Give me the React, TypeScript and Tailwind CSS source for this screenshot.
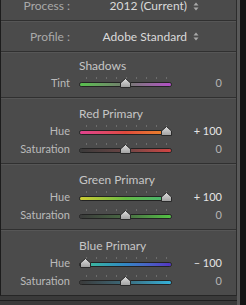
import React from "react";

type SliderRow = { label: string; track: string; pos: number; value: string; bright?: boolean };
type Section = { title: string; top: string; rows: SliderRow[] };

const ticks = [0, 1, 2, 3, 4, 5, 6, 7, 8];

const sections: Section[] = [
  {
    title: "Shadows",
    top: "pt-[5px]",
    rows: [
      { label: "Tint", track: "bg-linear-to-r from-[#56c04c] via-[#707a6c] to-[#b24cc6]", pos: 0.5, value: "0" },
    ],
  },
  {
    title: "Red Primary",
    top: "pt-[7px]",
    rows: [
      { label: "Hue", track: "bg-linear-to-r from-[#e0428e] via-[#e04a3c] to-[#ea8a22]", pos: 1, value: "+ 100", bright: true },
      { label: "Saturation", track: "bg-linear-to-r from-[#3a3a3a] via-[#6a4444] to-[#d24242]", pos: 0.5, value: "0" },
    ],
  },
  {
    title: "Green Primary",
    top: "pt-[7px]",
    rows: [
      { label: "Hue", track: "bg-linear-to-r from-[#cccc32] via-[#66bc42] to-[#42b474]", pos: 1, value: "+ 100", bright: true },
      { label: "Saturation", track: "bg-linear-to-r from-[#3a3a3a] via-[#486a42] to-[#52c442]", pos: 0.5, value: "0" },
    ],
  },
  {
    title: "Blue Primary",
    top: "pt-[7px]",
    rows: [
      { label: "Hue", track: "bg-linear-to-r from-[#42c290] via-[#3286c4] to-[#5232c2]", pos: 0, value: "– 100", bright: true },
      { label: "Saturation", track: "bg-linear-to-r from-[#3a3a3a] via-[#3a6a7a] to-[#32b2da]", pos: 0.5, value: "0" },
    ],
  },
];

function Divider() {
  return (
    <div>
      <div className="h-px bg-[#303030]" />
      <div className="h-px bg-[#565656]" />
    </div>
  );
}

function UpDown() {
  return (
    <svg width="6" height="9" viewBox="0 0 6 9" className="ml-[6px] shrink-0">
      <path d="M3 0.5 L5.5 3.5 H0.5 Z" fill="#a8a8a8" />
      <path d="M3 8.5 L5.5 5.5 H0.5 Z" fill="#a8a8a8" />
    </svg>
  );
}

function Thumb({ pos }: { pos: number }) {
  return (
    <svg
      className="absolute top-[4px]"
      style={{ left: 1 + pos * 80.5 }}
      width="11"
      height="10"
      viewBox="0 0 11 10"
    >
      <defs>
        <linearGradient id="thumbFill" x1="0" y1="0" x2="0" y2="1">
          <stop offset="0" stopColor="#e0e0e0" />
          <stop offset="1" stopColor="#9e9e9e" />
        </linearGradient>
      </defs>
      <path
        d="M5.5 0.5 L10.5 5 V9.5 H0.5 V5 Z"
        fill="url(#thumbFill)"
        stroke="#2a2a2a"
        strokeWidth="1"
        strokeLinejoin="round"
      />
    </svg>
  );
}

function Slider({ track, pos }: { track: string; pos: number }) {
  return (
    <div className="relative h-[18px] w-[93px] shrink-0">
      {ticks.map((i) => (
        <span key={i} className="absolute top-[3px] h-[2px] w-px bg-[#6c6c6c]" style={{ left: 7 + i * 10 }} />
      ))}
      <div className="absolute left-0 top-[8px] h-[5px] w-full overflow-hidden rounded-full border border-[#232323]">
        <div className={`h-full w-full ${track}`} />
      </div>
      <Thumb pos={pos} />
    </div>
  );
}

function PopupRow({ label, value, cls }: { label: string; value: string; cls: string }) {
  return (
    <div className={`flex items-center text-[12px] ${cls}`}>
      <span className="w-[69px] text-right text-[#a9a9a9]">{label}</span>
      <span className="w-[117px] text-right text-[#dadada]">{value}</span>
      <UpDown />
    </div>
  );
}

export default function App() {
  return (
    <div className="flex h-[305px] w-[246px] bg-[#3a3a3a] font-['Lato','Liberation_Sans',sans-serif]">
      <div className="flex w-[237px] flex-col">
        <div className="h-[296px] border-b border-l border-r border-b-[#262626] border-l-[#1c1c1c] border-r-[#2c2c2c] bg-[#4b4b4b]">
          <PopupRow label="Process :" value="2012 (Current)" cls="h-[20px] pb-[8px] leading-[12px]" />
          <Divider />
          <PopupRow label="Profile :" value="Adobe Standard" cls="h-[29px] leading-[16px]" />
          {sections.map((s, si) => (
            <div key={s.title}>
              <Divider />
              <div className={`${s.top} pb-[5px]`}>
                <div className="h-[16px] pl-[78px] text-[12px] leading-[16px] text-[#c6c6c6]">{s.title}</div>
                {s.rows.map((r) => (
                  <div key={r.label + si} className="flex h-[18px] items-center text-[11px] leading-[18px]">
                    <span className="w-[69px] text-right text-[#bababa]">{r.label}</span>
                    <div className="ml-[9px]">
                      <Slider track={r.track} pos={r.pos} />
                    </div>
                    <span className={`w-[50px] text-right ${r.bright ? "text-[#e4e4e4]" : "text-[#b4b4b4]"}`}>
                      {r.value}
                    </span>
                  </div>
                ))}
              </div>
            </div>
          ))}
        </div>
        <div className="mt-[4px] h-px bg-[#1e1e1e]" />
      </div>
      <div className="w-[3px] bg-[#595959]" />
      <div className="flex-1 bg-[#141414]" />
    </div>
  );
}
